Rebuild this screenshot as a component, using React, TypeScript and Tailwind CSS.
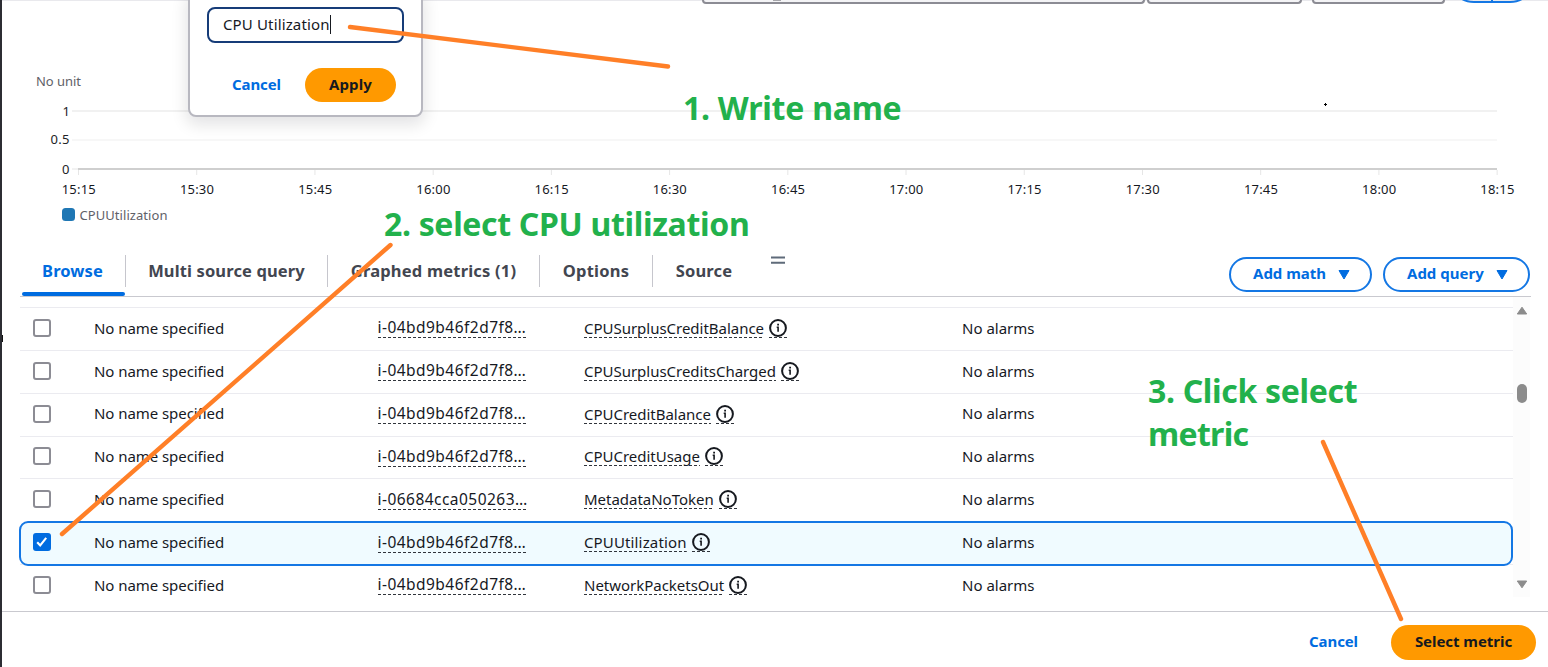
import React from "react";

type Metric = { id: string; name: string; selected?: boolean };

const METRICS: Metric[] = [
  { id: "i-04bd9b46f2d7f8…", name: "CPUSurplusCreditBalance" },
  { id: "i-04bd9b46f2d7f8…", name: "CPUSurplusCreditsCharged" },
  { id: "i-04bd9b46f2d7f8…", name: "CPUCreditBalance" },
  { id: "i-04bd9b46f2d7f8…", name: "CPUCreditUsage" },
  { id: "i-06684cca050263…", name: "MetadataNoToken" },
  { id: "i-04bd9b46f2d7f8…", name: "CPUUtilization", selected: true },
  { id: "i-04bd9b46f2d7f8…", name: "NetworkPacketsOut" },
];

const TIMES = ["15:15", "15:30", "15:45", "16:00", "16:15", "16:30", "16:45", "17:00", "17:15", "17:30", "17:45", "18:00", "18:15"];

const DASHES =
  "bg-[repeating-linear-gradient(90deg,#30343b_0_3px,transparent_3px_5px)] bg-[length:100%_1px] bg-bottom bg-no-repeat";

function InfoIcon() {
  return (
    <span className={`ml-[5px] flex h-[19px] w-[18px] items-start ${DASHES}`}>
      <svg width="18" height="18" viewBox="0 0 18 18" fill="none">
        <circle cx="9" cy="9" r="7.9" stroke="#16191f" strokeWidth="2" />
        <path d="M7.700 8.200h1.400v4.600" stroke="#16191f" strokeWidth="1.600" />
        <path d="M8.200 4.800h1.800v1.700H8.200z" fill="#16191f" />
      </svg>
    </span>
  );
}

function Checkbox({ checked }: { checked?: boolean }) {
  if (checked) {
    return (
      <span className="flex size-[18px] items-center justify-center rounded-[3px] bg-[#006ce0]">
        <svg width="18" height="18" viewBox="0 0 18 18" fill="none">
          <path d="M4.200 9.200l3 3.300 6-7.600" stroke="#fff" strokeWidth="2.100" />
        </svg>
      </span>
    );
  }
  return <span className="size-[18px] rounded-[3px] border-2 border-[#8c8c94] bg-white" />;
}

function Row({ metric }: { metric: Metric }) {
  return (
    <div
      className={
        metric.selected
          ? "relative z-10 flex h-[42.85px] items-center pb-px before:absolute before:-bottom-[1.5px] before:top-0 before:-left-px before:right-0 before:rounded-[9px] before:border-2 before:border-[#1477e4] before:bg-[#f0fbff]"
          : "relative flex h-[42.85px] items-center border-t border-[#ebebf0] pb-[2px]"
      }
    >
      <div className="relative ml-[13px] flex w-[61px]">
        <Checkbox checked={metric.selected} />
      </div>
      <div className="relative w-[284px] text-[15px] tracking-[-0.06px]">No name specified</div>
      <div className="relative flex w-[206px]">
        <span className={`-ml-[0.5px] mt-px h-[20px] text-[15.5px] leading-[18px] tracking-[0.46px] ${DASHES}`}>{metric.id}</span>
      </div>
      <div className="relative flex w-[378px] items-center pt-px">
        <span className={`h-[19px] text-[15px] leading-[18px] ${metric.selected ? "tracking-[0.14px]" : "tracking-[-0.02px]"} ${DASHES}`}>{metric.name}</span>
        <InfoIcon />
      </div>
      <div className="relative text-[15px]">No alarms</div>
    </div>
  );
}

function Chart() {
  return (
    <svg width="1546" height="236" viewBox="2 4 1546 236" className="block shrink-0" fontFamily="'Noto Sans', sans-serif" fontSize="13">
      <text x="36" y="86" fill="#5f6168" textLength="45">No unit</text>
      <path d="M72 111H1497" stroke="#ececec" strokeWidth="1.5" />
      <path d="M72 140H1497" stroke="#f4f4f4" strokeWidth="1.5" />
      <path d="M72 169H79" stroke="#eee" strokeWidth="1.5" />
      <path d="M78 169H1497" stroke="#cfcfcf" strokeWidth="2" />
      <g fill="#222326" textAnchor="end">
        <text x="70" y="115.5">1</text>
        <text x="69.5" y="144" textLength="19">0.5</text>
        <text x="69.5" y="173.5">0</text>
      </g>
      {TIMES.map((time, i) => (
        <g key={time}>
          <path d={`M${78.5 + i * 118.22} 170v5`} stroke="#e6e6e6" />
          <text x={78.7 + i * 118.22} y="194" textAnchor="middle" textLength="34" fill="#16191f">{time}</text>
        </g>
      ))}
      <rect x="62" y="208" width="13" height="13" rx="3.5" fill="#1f77b4" />
      <text x="79.5" y="220" fill="#5f6168" textLength="88">CPUUtilization</text>
      <path d="M1324 104.5h3M1325.5 103v3" stroke="#000" />
    </svg>
  );
}

function Tab({ label, className }: { label: string; className: string }) {
  return (
    <div className={`flex h-[32px] items-center justify-center whitespace-nowrap border-r text-[16.5px] font-bold ${className}`}>
      {label}
    </div>
  );
}

function AddButton({ label, className }: { label: string; className: string }) {
  return (
    <button className={`flex h-[35px] items-center justify-between rounded-full border-2 border-[#1477e4] pb-[2px] pl-[22px] pr-[20px] text-[15px] font-bold text-[#006ce0] ${className}`}>
      {label}
      <svg width="12" height="10" viewBox="0 0 12 10" className="mt-[2px]">
        <path d="M1 .5h10L6 9z" fill="#006ce0" stroke="#006ce0" strokeLinejoin="round" />
      </svg>
    </button>
  );
}

export default function App() {
  return (
    <div className="relative flex h-[667px] w-[1548px] flex-col overflow-hidden border-l-2 border-[#2c2d33] bg-white font-['Noto_Sans',sans-serif] text-[#16191f]">
      <header className="flex h-[4px] shrink-0 items-end border-t border-[#e9e9ed] pl-[700px]">
        <div className="h-[4px] w-[443px] rounded-b-[8px] border-2 border-t-0 border-[#8c8c94] bg-[#f4f4f6]">
          <div className="ml-[69px] h-px w-[8px] bg-[#a5a5aa]" />
        </div>
        <div className="ml-[2px] h-[4px] w-[155px] rounded-b-[8px] border-2 border-t-0 border-[#8c8c94] bg-[#f4f4f6]" />
        <div className="ml-[10px] h-[4px] w-[133px] rounded-b-[8px] border-2 border-t-0 border-[#8c8c94] bg-[#f4f4f6]" />
        <svg width="66" height="4" viewBox="0 0 66 4" className="ml-[15px]" fill="none" stroke="#1477e4" strokeWidth="2">
          <path d="M2-1Q7 2 14 2H50Q57 2 62-1M32 0v2" />
        </svg>
      </header>

      <Chart />

      <section className="ml-[18px] flex h-[57px] w-[1511px] shrink-0 border-b border-[#c9c9cf] pt-[15px]">
        <div className="flex w-[106px] flex-col justify-between">
          <Tab label="Browse" className="border-[#c6c6cd] tracking-[0.1px] text-[#006ce0]" />
          <div className="ml-[2px] h-[4px] w-[103px] rounded-full bg-[#006ce0]" />
        </div>
        <Tab label="Multi source query" className="w-[202px] border-[#c6c6cd] tracking-[0.13px] text-[#424650]" />
        <Tab label="Graphed metrics (1)" className="w-[212px] border-[#c6c6cd] tracking-[0.2px] text-[#424650]" />
        <Tab label="Options" className="w-[113px] border-[#c6c6cd] tracking-[0.2px] text-[#424650]" />
        <Tab label="Source" className="w-[103px] border-transparent tracking-[0.13px] text-[#424650]" />
        <svg width="14" height="9" viewBox="0 0 14 9" className="ml-[15px] mt-px">
          <path d="M0 1.500h14M0 6.800h14" stroke="#5f6b7a" strokeWidth="2" />
        </svg>
        <div className="ml-auto flex gap-[11px] pr-px pt-[2px]">
          <AddButton label="Add math" className="w-[143px]" />
          <AddButton label="Add query" className="w-[147px]" />
        </div>
      </section>

      <main className="ml-[18px] flex h-[314px] w-[1511px] shrink-0">
        <div className="w-[1493px] pt-[10px]">
          {METRICS.map((m) => (
            <Row key={m.name} metric={m} />
          ))}
        </div>
        <div className="flex h-[300px] w-[17px] flex-col items-center bg-[#fcfcfc] pt-[9px]">
          <svg width="12" height="9" viewBox="0 0 12 9">
            <path d="M1.300 8L6 1.200 10.700 8z" fill="#8b8b8b" stroke="#8b8b8b" strokeLinejoin="round" />
          </svg>
          <div className="mt-[69px] h-[19px] w-[10px] rounded-full bg-[#8b8b8b]" />
          <svg width="12" height="9" viewBox="0 0 12 9" className="mb-[8px] mt-auto">
            <path d="M1.300 1L6 7.800 10.700 1z" fill="#8b8b8b" stroke="#8b8b8b" strokeLinejoin="round" />
          </svg>
        </div>
      </main>

      <footer className="flex flex-1 items-start justify-end border-t border-[#c9c9cf] pr-[12px] pt-[13px] text-[15px] font-bold">
        <button className="mr-[33px] h-[33px] tracking-[-0.1px] text-[#006ce0]">Cancel</button>
        <button className="h-[35px] w-[145px] rounded-full bg-[#ff9900] pb-[2px] tracking-[-0.05px]">Select metric</button>
      </footer>

      <div className="absolute -top-[10px] left-[186px] h-[127px] w-[235px] rounded-[8px] border-2 border-[#b8b8c0] bg-white px-[17px] pt-[15px] shadow-[0_6px_16px_2px_rgba(0,7,22,0.11)]">
        <div className="flex h-[36px] w-[197px] items-center rounded-[8px] border-2 border-[#163c78] pb-[2px] pl-[14px] text-[15px] tracking-[0.14px]">
          CPU Utilization
          <span className="h-[19px] w-px bg-[#16191f]" />
        </div>
        <div className="mt-[25px] flex h-[34px] items-center text-[15px] font-bold">
          <button className="ml-[25px] w-[49px] pb-[2px] tracking-[-0.1px] text-[#006ce0]">Cancel</button>
          <button className="ml-[24px] h-[34px] w-[91px] rounded-full bg-[#ff9900] pb-[2px] tracking-[0.1px]">Apply</button>
        </div>
      </div>

      <div className="absolute -left-[2px] top-[335px] h-[7px] w-[3px] border border-[#111] bg-[#aaa]" />

      <div className="absolute left-[681px] top-[86px] whitespace-nowrap text-[32px] font-bold leading-[44px] tracking-[-0.25px] text-[#22b14c]">1. Write name</div>
      <div className="absolute left-[382px] top-[202px] whitespace-nowrap text-[32px] font-bold leading-[44px] tracking-[-0.33px] text-[#22b14c]">2. select CPU utilization</div>
      <div className="absolute left-[1146px] top-[369px] whitespace-nowrap text-[32px] font-bold leading-[43px] tracking-[-0.33px] text-[#22b14c]">
        3. Click select
        <br />
        <span className="tracking-[-0.7px]">metric</span>
      </div>
      <svg className="pointer-events-none absolute -left-[2px] top-0 z-20" width="1548" height="667" viewBox="0 0 1548 667">
        <path d="M350 27L668 66.500M390.500 245L62 534M1323 442L1401 619" stroke="#ff7f27" strokeWidth="4.400" strokeLinecap="round" fill="none" />
      </svg>
    </div>
  );
}
